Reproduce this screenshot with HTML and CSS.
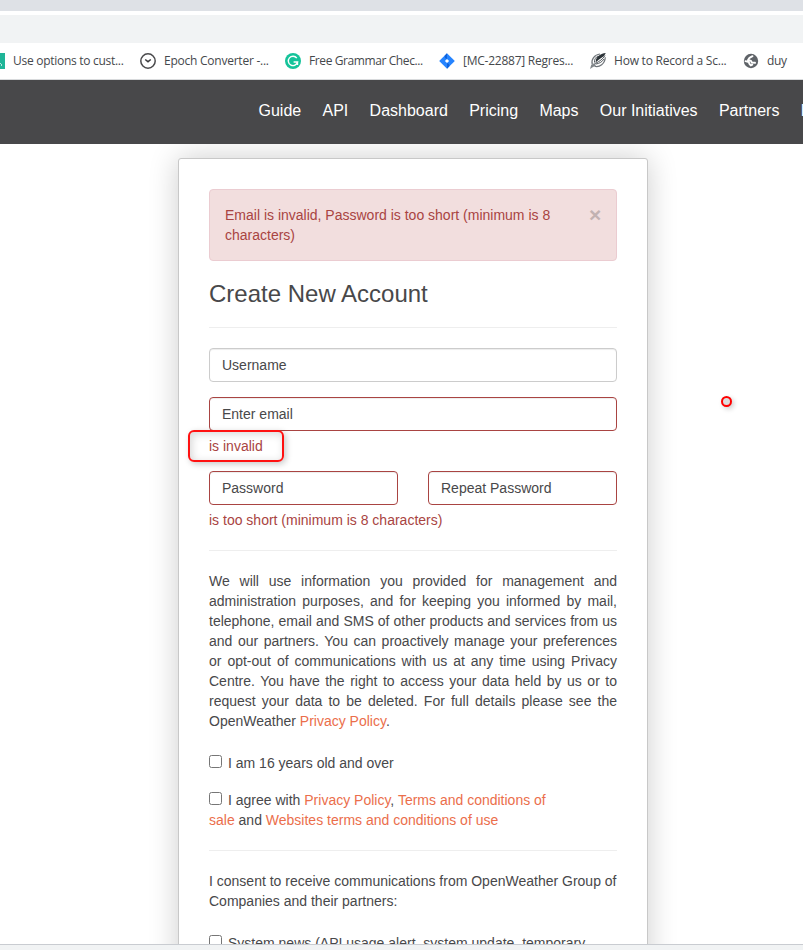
FILE: index.html
```html
<!DOCTYPE html>
<html lang="en">
<head>
<meta charset="utf-8">
<title>Create New Account</title>
<link rel="stylesheet" href="styles.css">
</head>
<body>
<div class="window">
  <div class="tabstrip"></div>
  <div class="toolbar"></div>
  <div class="bookmarks">
    <div class="bm bm-1"><svg class="ico ico-cut" width="5" height="16" viewBox="0 0 5 16"><path fill="#1fb598" d="M0 0h5v16H0z"/><path fill="#b5e8dc" d="M0 10h1v1H0zM1 11h1v2H1z"/></svg><span class="t1">Use options to cust...</span></div>
    <div class="bm bm-2"><svg class="ico" width="16" height="16" viewBox="0 0 16 16"><circle cx="8" cy="8" r="7.2" fill="#fff" stroke="#4a4a4c" stroke-width="1.5"/><path d="M5.2 6.5 8 8.7l2.8-2.2" fill="none" stroke="#3c3c3e" stroke-width="1.5"/></svg><span class="t2">Epoch Converter -...</span></div>
    <div class="bm bm-3"><svg class="ico" width="16" height="16" viewBox="0 0 16 16"><circle cx="8" cy="8" r="8" fill="#15c39a"/><path d="M11.8 5.1A4.7 4.7 0 1 0 12.6 9H8.6M12.5 8.5v3.4" fill="none" stroke="#fff" stroke-width="1.4"/></svg><span class="t3">Free Grammar Chec...</span></div>
    <div class="bm bm-4"><svg class="ico" width="16" height="16" viewBox="0 0 16 16"><path fill="#2684ff" d="M8 .2 15.8 8 8 15.8.2 8z"/><path fill="#0f62db" d="M8 .2 5.6 2.700 6 5 8 6zM8 15.800l2.400-2.500L10 11l-2-1z"/><path fill="#fff" d="m8 5.900 2.100 2.100L8 10.100 5.900 8z"/></svg><span class="t4">[MC-22887] Regres...</span></div>
    <div class="bm bm-5"><svg class="ico" width="16" height="16" viewBox="0 0 16 16"><path d="M2.300 11.500C.8 6.500 4.500 1.500 10 1M4.500 13.200c5 1.500 10.500-2.500 10.800-9" fill="none" stroke="#70757a" stroke-width="1.200"/><path fill="#2c3338" d="M15.800 0C10.500.8 7.500 3 6 6.500l-.5 3L9 6.500l5-3.500z"/><path d="M15 2.500C13 6 9.500 8.500 5 10.500M14 6c-1.800 2.800-4.500 4.500-8 5M4.500 9.500C4 6.500 6 4 8 3" fill="none" stroke="#555b60" stroke-width="1"/><path fill="#81868a" d="m0 16 1.200-4L4.500 10l1.500 2.500-3 1.500z"/></svg><span class="t5">How to Record a Sc...</span></div>
    <div class="bm bm-6"><svg class="ico" width="16" height="16" viewBox="0 0 16 16"><circle cx="8" cy="8" r="7.200" fill="#5f6368"/><path fill="none" stroke="#fff" stroke-width="1.900" stroke-linecap="round" stroke-linejoin="round" d="M9.500 3.200 6.500 4.800 5 7l3 .8.800 1.700 3.200.3M2.500 8.200l3.200.8.800 1.800 1.300 1.700 1.500-.8"/></svg><span class="t6">duy</span></div>
  </div>
  <nav class="nav">
    <a>Guide</a><a>API</a><a>Dashboard</a><a>Pricing</a><a>Maps</a><a>Our Initiatives</a><a>Partners</a><a>Blog</a>
  </nav>
  <main class="page">
    <form class="card">
      <div class="alert"><div>Email is invalid, Password is too short (minimum is 8 characters)</div><span class="close">×</span></div>
      <h3>Create New Account</h3>
      <hr>
      <input class="field" type="text" placeholder="Username">
      <input class="field error" type="text" placeholder="Enter email">
      <div class="help help-email">is invalid<i class="mark"></i></div>
      <div class="pair"><input class="field error" type="text" placeholder="Password"><input class="field error" type="text" placeholder="Repeat Password"></div>
      <div class="help">is too short (minimum is 8 characters)</div>
      <hr>
      <p class="legal">We will use information you provided for management and administration purposes, and for keeping you informed by mail, telephone, email and SMS of other products and services from us and our partners. You can proactively manage your preferences or opt-out of communications with us at any time using Privacy Centre. You have the right to access your data held by us or to request your data to be deleted. For full details please see the OpenWeather <a>Privacy Policy</a>.</p>
      <label class="check age"><i class="box"></i>I am 16 years old and over</label>
      <label class="check"><i class="box"></i>I agree with <a>Privacy Policy</a>, <a>Terms and conditions of<br>sale</a> and <a>Websites terms and conditions of use</a></label>
      <hr>
      <p class="consent">I consent to receive communications from OpenWeather Group of Companies and their partners:</p>
      <label class="check"><i class="box"></i>System news (API usage alert, system update, temporary</label>
    </form>
    <i class="dot"></i>
  </main>
  <div class="bottombar"></div>
</div>
</body>
</html>
```
FILE: styles.css
```css
* { box-sizing: border-box; }
body { margin: 0; background: #fff; color: #48484a; font: 14px/20px "Liberation Sans", Arial, sans-serif; }
.window { height: 950px; display: flex; flex-direction: column; overflow: hidden; }
.tabstrip { flex: none; height: 11px; background: #dee1e6; }
.toolbar { flex: none; height: 28px; margin-top: 4px; background: #f1f3f4; }
.bookmarks { flex: none; height: 37px; display: flex; border-bottom: 1px solid #d8dadc; font: 12px/16px "Open Sans", "Noto Sans", sans-serif; color: #45484c; white-space: nowrap; }
.bm { flex: none; display: flex; padding-top: 10px; }
.bm span { margin-left: 8px; }
.ico { flex: none; display: block; }
.bm-1 { width: 140px; }
.bm-2 { width: 145px; }
.bm-3 { width: 154px; }
.bm-4 { width: 151px; }
.bm-5 { width: 153px; }
.t1 { letter-spacing: -0.28px; }
.t2 { letter-spacing: -0.24px; }
.t3 { letter-spacing: -0.4px; }
.t4 { letter-spacing: -0.24px; }
.t5 { letter-spacing: -0.22px; }
.t6 { letter-spacing: -0.3px; }
.nav { flex: none; height: 64px; padding: 20px 0 0 258.5px; display: flex; gap: 21.3px; overflow: hidden; background: #48484a; color: #fff; font-size: 16px; line-height: 22px; white-space: nowrap; }
.page { position: relative; flex: 1; min-height: 0; overflow: hidden; padding: 14px 0 0 178px; }
.card { width: 470px; height: 900px; padding: 30px; border: 1px solid #c8c8c8; border-radius: 3px; background: #fff; box-shadow: 0 0 30px rgba(0, 0, 0, .2); }
.alert { display: flex; justify-content: space-between; height: 72px; padding: 15px; border: 1px solid #ebccd1; border-radius: 4px; background: #f2dede; color: #a94442; }
.alert div { width: 340px; }
.close { width: 12px; color: #c2b2b2; font-size: 21px; font-weight: bold; line-height: 19px; }
h3 { margin: 20px 0 0; font-size: 24px; font-weight: normal; line-height: 26px; }
hr { height: 1px; margin: 20px 0; border: 0; background: #eee; }
.field { display: block; width: 100%; height: 34px; margin: 0 0 15px; padding: 6px 12px; border: 1px solid #ccc; border-radius: 4px; background: #fff; box-shadow: inset 0 1px 1px rgba(0, 0, 0, .075); font: inherit; color: #48484a; }
.field::placeholder { color: #48484a; opacity: 1; }
.field.error { margin-bottom: 5px; border-color: #a94442; }
.help { color: #a94442; }
.help-email { position: relative; margin-bottom: 15px; }
.mark { position: absolute; left: -21.500px; top: -6.500px; width: 96px; height: 32px; border: 2px solid #f11; border-radius: 6px; box-shadow: 2px 2px 6px rgba(0, 0, 0, .22), inset 2px 2px 8px rgba(0, 0, 0, .16); }
.pair { display: flex; gap: 30px; }
p { margin: 0; }
.legal { text-align: justify; }
a { color: #eb6e4b; }
.nav a { color: #fff; }
.check { display: block; }
.age { margin: 22px 0 17px; }
.box { display: inline-block; width: 13px; height: 13px; margin-right: 6px; border: 1px solid #767676; border-radius: 2.5px; background: #fff; }
.consent { margin-bottom: 22px; }
.dot { position: absolute; left: 721px; top: 252px; width: 11px; height: 11px; border: 2px solid #f00; border-radius: 50%; background: #ddd; box-shadow: 2px 2px 5px rgba(0, 0, 0, .2); }
.bottombar { flex: none; height: 6px; border-top: 1px solid #c9ccd1; background: #f1f3f4; }
```
